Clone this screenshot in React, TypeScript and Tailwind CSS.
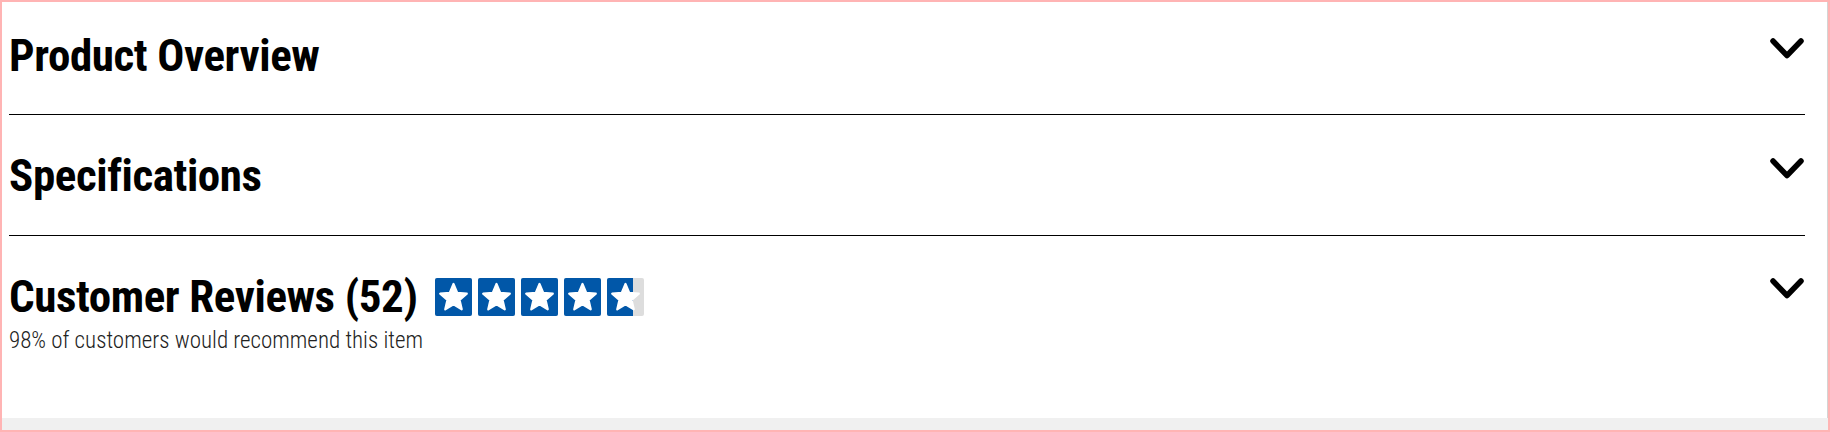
import React from 'react';

const titleFont = { fontFamily: "'Roboto Condensed', Roboto, 'Liberation Sans', sans-serif" };

const Chevron: React.FC<{ className?: string }> = ({ className }) => (
  <svg className={className} width="34" height="21" viewBox="0 0 34 21" fill="none">
    <polyline
      points="3,3 17,17.5 31,3"
      stroke="#000"
      strokeWidth="5.5"
      strokeLinecap="round"
      strokeLinejoin="round"
    />
  </svg>
);

const StarGlyph = () => (
  <svg className="absolute inset-0" width="37" height="38" viewBox="0 0 37 38">
    <path
      d="M18.5 6 L22.26 14.82 L31.81 15.67 L24.59 21.98 L26.73 31.33 L18.5 26.4 L10.27 31.33 L12.41 21.98 L5.19 15.67 L14.74 14.82 Z"
      fill="#fff"
      stroke="#fff"
      strokeWidth="2.2"
      strokeLinejoin="round"
    />
  </svg>
);

const StarBox: React.FC<{ fill: number }> = ({ fill }) => (
  <div className="relative w-[37px] h-[38px] rounded-[2px] overflow-hidden bg-[#dddddd]">
    <div className="absolute left-0 top-0 h-full bg-[#0157a8]" style={{ width: `${fill}%` }}></div>
    <StarGlyph />
  </div>
);

const Rating: React.FC<{ value: number }> = ({ value }) => (
  <div className="flex gap-[6px]">
    {[0, 1, 2, 3, 4].map((i) => {
      const fill = Math.max(0, Math.min(1, value - i)) * 100;
      return <StarBox key={i} fill={fill} />;
    })}
  </div>
);

export default function App() {
  return (
    <div className="w-[1830px] h-[432px] border-2 border-[#ffb4b4] bg-white flex flex-col" style={titleFont}>
      <div className="flex-1 border-r border-[#d4d4d4] pl-[7px] pr-[22px]">
        <div className="h-[113px] flex justify-between items-start border-b border-black pt-[27px]">
          <h2 className="text-[45px] leading-[54px] font-bold text-black font-stretch-condensed tracking-[-0.4px]">
            Product Overview
          </h2>
          <Chevron className="mt-[9px] mr-[1px]" />
        </div>
        <div className="h-[121px] flex justify-between items-start border-b border-black pt-[34px]">
          <h2 className="text-[45px] leading-[54px] font-bold text-black font-stretch-condensed tracking-[-0.4px]">
            Specifications
          </h2>
          <Chevron className="mt-[9px] mr-[1px]" />
        </div>
        <div className="flex justify-between items-start pt-[34px]">
          <div className="flex flex-col">
            <div className="flex items-center gap-[17px]">
              <h2 className="text-[45px] leading-[54px] font-bold text-black font-stretch-condensed tracking-[-0.4px]">
                Customer Reviews (52)
              </h2>
              <Rating value={4.7} />
            </div>
            <p className="mt-[4px] text-[23px] leading-[26px] font-light text-[#222] font-stretch-condensed">
              98% of customers would recommend this item
            </p>
          </div>
          <Chevron className="mt-[8px] mr-[1px]" />
        </div>
      </div>
      <div className="h-[12px] bg-[#f0f0f0]"></div>
    </div>
  );
}
